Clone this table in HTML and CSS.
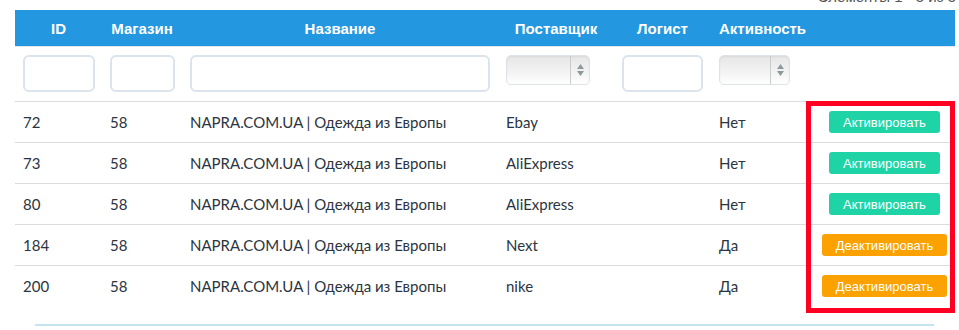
FILE: index.html
```html
<!DOCTYPE html>
<html lang="ru">
<head>
<meta charset="utf-8">
<title>Поставщики</title>
<link rel="stylesheet" href="styles.css">
</head>
<body>
<div class="page">
  <div class="summary"><span class="summary-text">Элементы 1 - 5 из 5</span></div>
  <table class="grid">
    <colgroup>
      <col class="c-id"><col class="c-shop"><col class="c-name"><col class="c-sup"><col class="c-log"><col class="c-act"><col class="c-btn">
    </colgroup>
    <thead>
      <tr class="head">
        <th>ID</th><th>Магазин</th><th>Название</th><th>Поставщик</th><th>Логист</th><th>Активность</th><th></th>
      </tr>
      <tr class="filters">
        <td><input class="inp" type="text"></td>
        <td><input class="inp" type="text"></td>
        <td><input class="inp" type="text"></td>
        <td><div class="sel sel-sup"><span class="sel-arrows"><svg width="9" height="14" viewBox="0 0 9 14"><path d="M4.5 1 L8 6 L1 6 Z M1 8 L8 8 L4.5 13 Z" fill="#8d9a99"/></svg></span></div></td>
        <td><input class="inp" type="text"></td>
        <td><div class="sel sel-act"><span class="sel-arrows"><svg width="9" height="14" viewBox="0 0 9 14"><path d="M4.5 1 L8 6 L1 6 Z M1 8 L8 8 L4.5 13 Z" fill="#8d9a99"/></svg></span></div></td>
        <td></td>
      </tr>
    </thead>
    <tbody>
      <tr><td>72</td><td>58</td><td>NAPRA.COM.UA | Одежда из Европы</td><td>Ebay</td><td></td><td>Нет</td><td class="bc"><button class="btn on">Активировать</button></td></tr>
      <tr><td>73</td><td>58</td><td>NAPRA.COM.UA | Одежда из Европы</td><td>AliExpress</td><td></td><td>Нет</td><td class="bc"><button class="btn on">Активировать</button></td></tr>
      <tr><td>80</td><td>58</td><td>NAPRA.COM.UA | Одежда из Европы</td><td>AliExpress</td><td></td><td>Нет</td><td class="bc"><button class="btn on">Активировать</button></td></tr>
      <tr><td>184</td><td>58</td><td>NAPRA.COM.UA | Одежда из Европы</td><td>Next</td><td></td><td>Да</td><td class="bc"><button class="btn off">Деактивировать</button></td></tr>
      <tr class="last"><td>200</td><td>58</td><td>NAPRA.COM.UA | Одежда из Европы</td><td>nike</td><td></td><td>Да</td><td class="bc"><button class="btn off">Деактивировать</button></td></tr>
    </tbody>
  </table>
  <div class="pager"></div>
  <div class="highlight"></div>
</div>
</body>
</html>
```
FILE: styles.css
```css
html, body {
  margin: 0;
  padding: 0;
  background: #fff;
}
body {
  font-family: Lato, "Open Sans", sans-serif;
  color: #2b3440;
  width: 959px;
  height: 330px;
  overflow: hidden;
}
.page {
  position: relative;
  padding: 0 4px 0 15px;
}
.summary {
  height: 10px;
  position: relative;
  overflow: hidden;
}
.summary-text {
  position: absolute;
  left: 803px;
  bottom: 6px;
  font-family: "Liberation Sans", Arial, sans-serif;
  font-size: 15px;
  line-height: 15px;
  color: #555;
  white-space: nowrap;
}
.grid {
  width: 940px;
  border-collapse: collapse;
  table-layout: fixed;
}
.c-id { width: 87px; }
.c-shop { width: 80px; }
.c-name { width: 316px; }
.c-sup { width: 116px; }
.c-log { width: 97px; }
.c-act { width: 95px; }
.c-btn { width: 149px; }
.head th {
  background: #2397df;
  color: #fff;
  font-family: "Liberation Sans", Arial, sans-serif;
  font-weight: bold;
  font-size: 15px;
  height: 36px;
  padding: 0 2px;
  text-align: center;
  border-bottom: 1px solid #dfe8ee;
  white-space: nowrap;
}
.head th:nth-child(6) { padding-left: 8px; text-align: left; }
.filters td {
  height: 54px;
  padding: 0 8px;
  vertical-align: top;
  border-bottom: 1px solid #dcdcdc;
}
.inp {
  display: block;
  box-sizing: border-box;
  width: 100%;
  height: 37px;
  margin-top: 8px;
  border: 2px solid #dbe3ec;
  border-radius: 6px;
  background: #fff;
}
.filters td:nth-child(1) .inp { width: 72px; }
.filters td:nth-child(2) .inp { width: 65px; }
.filters td:nth-child(3) .inp { width: 300px; }
.filters td:nth-child(5) .inp { width: 81px; }
.sel {
  position: relative;
  box-sizing: border-box;
  height: 30px;
  margin-top: 8px;
  border: 1px solid #dde3e8;
  border-radius: 5px;
  background: linear-gradient(#e6e6e6, #f6f6f6 70%, #ffffff);
  box-shadow: inset 0 1px 2px rgba(0,0,0,0.06);
  display: flex;
  justify-content: flex-end;
}
.sel-sup { width: 84px; }
.sel-act { width: 71px; }
.sel-arrows {
  width: 18px;
  border-left: 1px solid #c9cccc;
  display: flex;
  align-items: center;
  justify-content: center;
}
tbody td {
  height: 40px;
  padding: 0 8px;
  font-size: 15px;
  white-space: nowrap;
  border-bottom: 1px solid #dcdcdc;
  vertical-align: middle;
}
tbody tr.last td { border-bottom: none; }
tbody td.bc { text-align: center; padding: 0 0 0 8px; }
.btn {
  border: none;
  border-radius: 3px;
  color: #fff;
  font-family: "Liberation Sans", Arial, sans-serif;
  font-size: 13px;
  height: 22px;
  padding: 0 4px;
  cursor: pointer;
}
.btn.on { background: #1ed4a7; width: 111px; }
.btn.off { background: #fba100; width: 125px; }
.pager {
  margin: 18px 21px 0 20px;
  border-top: 2px solid #c3e3f1;
  height: 10px;
}
.highlight {
  position: absolute;
  left: 806px;
  top: 101px;
  width: 149px;
  height: 212px;
  box-sizing: border-box;
  border: 5px solid #ff0022;
}
```
